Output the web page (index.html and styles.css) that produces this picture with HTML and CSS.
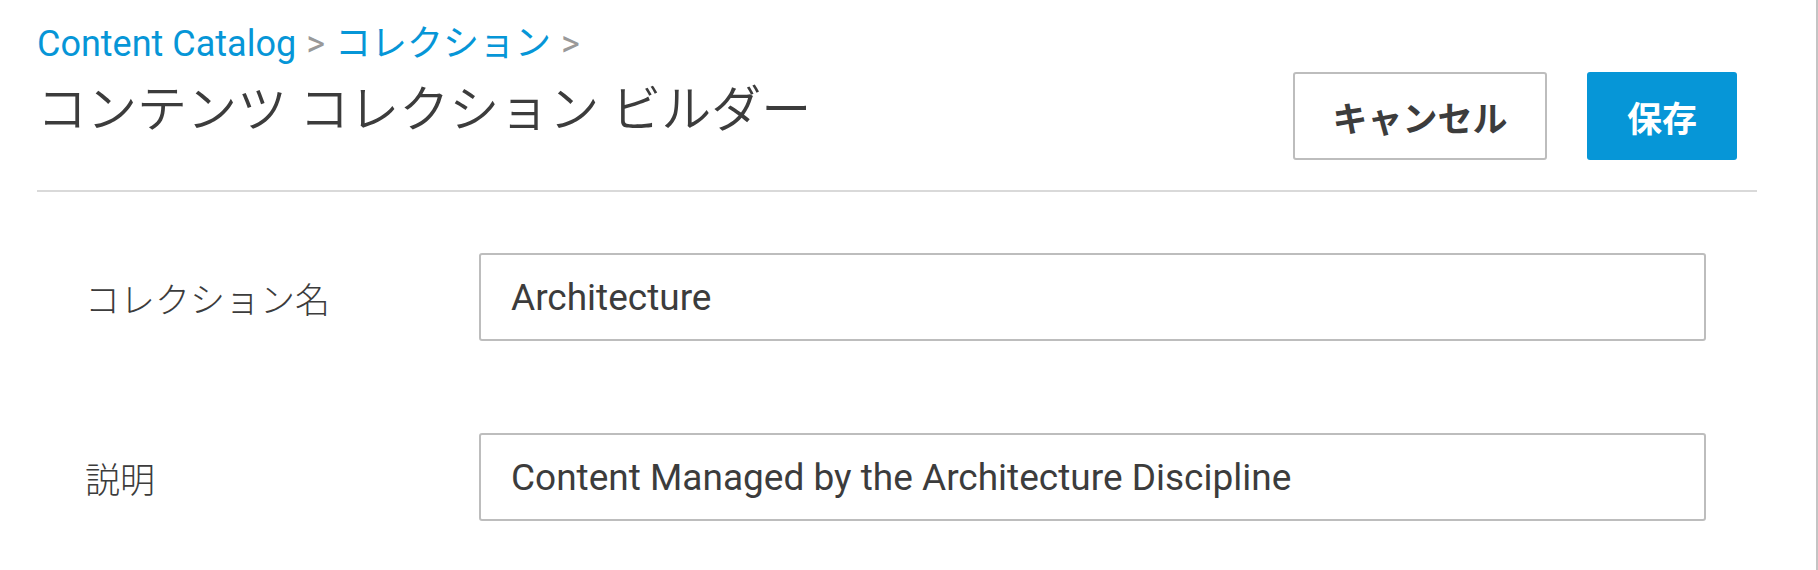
FILE: index.html
```html
<!DOCTYPE html>
<html lang="ja">
<head>
<meta charset="utf-8">
<title>コンテンツ コレクション ビルダー</title>
<link rel="stylesheet" href="styles.css">
</head>
<body>
<div class="frame">
  <div class="page">
    <header class="header">
      <div class="heading">
        <nav class="crumbs">
          <a class="crumb" href="#">Content Catalog</a><span class="sep">&gt;</span><a class="crumb" href="#">コレクション</a><span class="sep">&gt;</span>
        </nav>
        <h1 class="title">コンテンツ コレクション ビルダー</h1>
      </div>
      <div class="actions">
        <button class="btn btn-cancel" type="button">キャンセル</button>
        <button class="btn btn-save" type="button">保存</button>
      </div>
    </header>
    <form class="form">
      <div class="row">
        <label class="label" for="name">コレクション名</label>
        <input class="field" id="name" type="text" value="Architecture">
      </div>
      <div class="row">
        <label class="label" for="desc">説明</label>
        <input class="field" id="desc" type="text" value="Content Managed by the Architecture Discipline">
      </div>
    </form>
  </div>
</div>
</body>
</html>
```
FILE: styles.css
```css
html, body {
  margin: 0;
  padding: 0;
  background: #ffffff;
}

body {
  font-family: Roboto, "Noto Sans CJK JP", sans-serif;
  color: #3c3c3c;
}

.frame {
  width: 1816px;
  height: 570px;
  border-right: 2px solid #c4c4c4;
  overflow: hidden;
}

.page {
  width: 1720px;
  margin-left: 37px;
}

.header {
  display: flex;
  justify-content: space-between;
  align-items: flex-start;
  height: 192px;
  box-sizing: border-box;
  padding-top: 24px;
  border-bottom: 2px solid #d9d9d9;
}

.crumbs {
  font-size: 36px;
  line-height: 40px;
  white-space: nowrap;
}

.crumb {
  color: #0696d7;
  text-decoration: none;
}

.sep {
  color: #999999;
  margin: 0 10px;
}

.title {
  margin: 16px 0 0;
  font-size: 50px;
  font-weight: 350;
  line-height: 60px;
  color: #3c3c3c;
  white-space: nowrap;
}

.actions {
  display: flex;
  gap: 40px;
  margin-top: 48px;
  margin-right: 20px;
}

.btn {
  height: 88px;
  border-radius: 3px;
  font-family: Roboto, "Noto Sans CJK JP", sans-serif;
  font-size: 35px;
  font-weight: 700;
  padding: 0;
  cursor: pointer;
}

.btn-cancel {
  width: 254px;
  background: #ffffff;
  color: #3c3c3c;
  border: 2px solid #bdbdbd;
}

.btn-save {
  width: 150px;
  background: #0696d7;
  color: #ffffff;
  border: none;
}

.form {
  padding: 61px 51px 0;
  display: flex;
  flex-direction: column;
  gap: 92px;
}

.row {
  display: flex;
  align-items: center;
}

.label {
  width: 391px;
  flex: none;
  margin-left: -3px;
  padding-right: 3px;
  font-size: 35px;
  font-weight: 300;
  color: #3c3c3c;
}

.field {
  flex: 1;
  height: 88px;
  box-sizing: border-box;
  border: 2px solid #bdbdbd;
  border-radius: 3px;
  padding: 0 30px;
  font-family: Roboto, "Noto Sans CJK JP", sans-serif;
  font-size: 37px;
  color: #3c3c3c;
  background: #ffffff;
  outline: none;
}
```
